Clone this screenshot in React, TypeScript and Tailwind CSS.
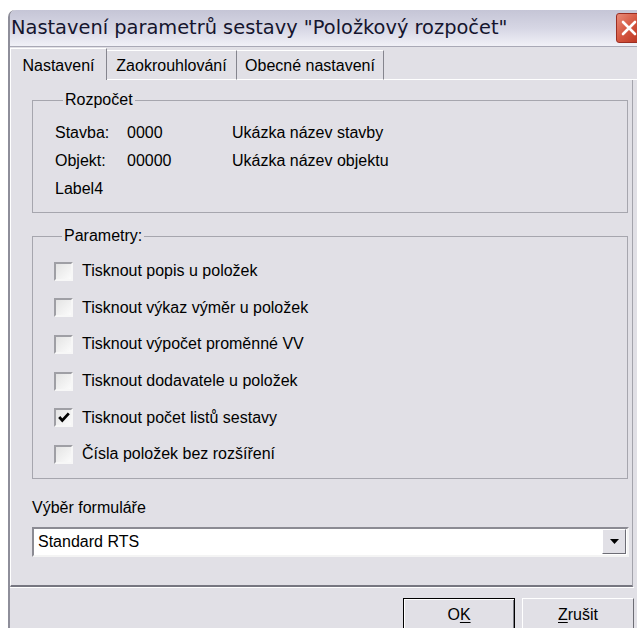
import React from "react";

const ui = "font-['Liberation_Sans',Arial,sans-serif]";

function CheckBox({ checked }: { checked?: boolean }) {
  return (
    <span className="flex h-[19px] w-[19px] shrink-0 items-center justify-center border-2 border-t-[#9f9fa5] border-l-[#9f9fa5] border-b-[#f7f7f7] border-r-[#f7f7f7] bg-gradient-to-br from-[#e4e4e4] to-[#fbfbfb]">
      {checked && (
        <svg width="12" height="11" viewBox="0 0 12 11">
          <path d="M1.2 5 L4.3 8.4 L10.8 1.4" fill="none" stroke="#000" strokeWidth="2.8" />
        </svg>
      )}
    </span>
  );
}

function Option({ label, checked }: { label: string; checked?: boolean }) {
  return (
    <div className="flex h-[36.6px] items-center gap-[9px]">
      <CheckBox checked={checked} />
      <span className="leading-[18px]">{label}</span>
    </div>
  );
}

function InfoRow({ name, code, title }: { name: string; code?: string; title?: string }) {
  return (
    <div className="flex h-[28px] items-center leading-[18px]">
      <span className="w-[72px]">{name}</span>
      {code !== undefined && <span className="w-[105px]">{code}</span>}
      {title && <span>{title}</span>}
    </div>
  );
}

export default function App() {
  const options = [
    { label: "Tisknout popis u položek" },
    { label: "Tisknout výkaz výměr u položek" },
    { label: "Tisknout výpočet proměnné VV" },
    { label: "Tisknout dodavatele u položek" },
    { label: "Tisknout počet listů sestavy", checked: true },
    { label: "Čísla položek bez rozšíření" },
  ];

  return (
    <div className={`h-[628px] w-[637px] overflow-hidden bg-white pl-[8px] pt-[10px] text-[16px] text-black ${ui}`}>
      <div className="flex h-[640px] w-[640px] flex-col rounded-tl-[7px] border-l-2 border-[#8e8e9a] bg-[#e1e0e6]">
        {/* title bar */}
        <div className="flex h-[37px] shrink-0 items-center justify-between rounded-tl-[6px] border-b border-[#a9a9b6] bg-gradient-to-b from-[#c5c5d6] via-[#d6d6e4] to-[#f1f1f7] pr-[6px]">
          <span className="pl-[1px] font-['DejaVu_Sans',Verdana,sans-serif] text-[19.4px] leading-[22px] text-[#15152e]">
            Nastavení parametrů sestavy "Položkový rozpočet"
          </span>
          <div className="flex h-[30px] w-[26px] items-center justify-center rounded-[3px] border border-[#9c2e22] bg-gradient-to-br from-[#e88a78] via-[#d4553f] to-[#b8321f]">
            <svg width="18" height="18" viewBox="0 0 18 18">
              <path d="M3 3 L15 15 M15 3 L3 15" stroke="#fff" strokeWidth="2.6" strokeLinecap="round" />
            </svg>
          </div>
        </div>

        {/* tabs */}
        <div className="flex h-[33px] shrink-0 items-end">
          <div className="flex h-[32px] w-[97px] items-center justify-center border-l border-t border-r border-l-white border-t-white border-r-[#85858e] pt-[3px]">
            Nastavení
          </div>
          <div className="flex h-[30px] w-[130px] items-center justify-center border-t border-r border-b border-t-white border-r-[#85858e] border-b-white pt-[2px]">
            Zaokrouhlování
          </div>
          <div className="flex h-[30px] w-[147px] items-center justify-center border-t border-r border-b border-t-white border-r-[#85858e] border-b-white pt-[2px]">
            Obecné nastavení
          </div>
          <div className="h-[1px] flex-1 bg-white" />
        </div>

        {/* tab page */}
        <div className="flex h-[507px] w-[623px] shrink-0 flex-col border-l border-r border-b-2 border-l-white border-r-[#a4a4ac] border-b-[#767680] pl-[21px] pr-[4px]">
          <fieldset className="mt-[11px] border border-[#a6a6ae] pb-[9px] pl-[22px]">
            <legend className="ml-[8px] px-[2px] leading-[18px]">Rozpočet</legend>
            <div className="pt-[10px]">
              <InfoRow name="Stavba:" code="0000" title="Ukázka název stavby" />
              <InfoRow name="Objekt:" code="00000" title="Ukázka název objektu" />
              <InfoRow name="Label4" />
            </div>
          </fieldset>

          <fieldset className="mt-[14px] border border-[#a6a6ae] pb-[5px] pl-[21px]">
            <legend className="ml-[8px] px-[2px] leading-[18px]">Parametry:</legend>
            <div className="pt-[8px]">
              {options.map((o) => (
                <Option key={o.label} label={o.label} checked={o.checked} />
              ))}
            </div>
          </fieldset>

          <div className="mt-[20px] leading-[18px]">Výběr formuláře</div>
          <div className="mt-[10px] flex h-[30px] w-[597px] items-center border-2 border-t-[#8b8b93] border-l-[#8b8b93] border-b-[#f4f4f4] border-r-[#f4f4f4] bg-white pl-[4px] pr-[1px]">
            <span className="flex-1 leading-[18px]">Standard RTS</span>
            <div className="flex h-[25px] w-[24px] items-center justify-center border border-t-white border-l-white border-b-[#6d6d75] border-r-[#6d6d75] bg-[#e1e0e6]">
              <svg width="9" height="5" viewBox="0 0 9 5">
                <path d="M0 0 H9 L4.5 5 Z" fill="#000" />
              </svg>
            </div>
          </div>
        </div>

        {/* buttons */}
        <div className="flex w-[624px] justify-end gap-[7px] border-t border-white pt-[10px]">
          <button className="flex h-[34px] w-[112px] items-center justify-center border border-black bg-[#e1e0e6] shadow-[inset_1px_1px_0_#fff,inset_-1px_-1px_0_#808088]">
            <span>
              O<span className="underline underline-offset-2">K</span>
            </span>
          </button>
          <button className="flex h-[34px] w-[112px] items-center justify-center border border-t-white border-l-white border-b-[#6d6d75] border-r-[#6d6d75] bg-[#e1e0e6]">
            <span>
              <span className="underline underline-offset-2">Z</span>rušit
            </span>
          </button>
        </div>
      </div>
    </div>
  );
}
